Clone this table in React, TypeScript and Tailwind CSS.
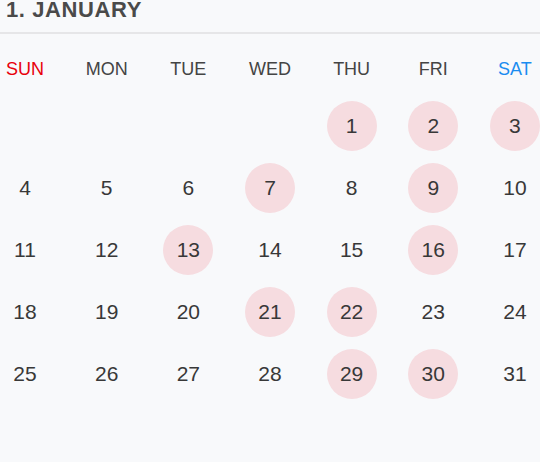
const weeks: (number | null)[][] = [
  [null, null, null, null, 1, 2, 3],
  [4, 5, 6, 7, 8, 9, 10],
  [11, 12, 13, 14, 15, 16, 17],
  [18, 19, 20, 21, 22, 23, 24],
  [25, 26, 27, 28, 29, 30, 31],
];

const marked = [1, 2, 3, 7, 9, 13, 16, 21, 22, 29, 30];

const days = [
  { label: "SUN", color: "text-[#e8000b]" },
  { label: "MON", color: "text-[#444]" },
  { label: "TUE", color: "text-[#444]" },
  { label: "WED", color: "text-[#444]" },
  { label: "THU", color: "text-[#444]" },
  { label: "FRI", color: "text-[#444]" },
  { label: "SAT", color: "text-[#1a8cf0]" },
];

export default function App() {
  return (
    <div className="w-[540px] h-[462px] overflow-hidden bg-[#f8f9fb] font-['Liberation_Sans',Arial,sans-serif]">
      <div className="h-[34px] border-b-2 border-[#e6e6e8] pl-[6px]">
        <h1 className="text-[22px] leading-[20px] font-bold tracking-[0.6px] text-[#4a4a4a]">1. JANUARY</h1>
      </div>

      <div className="flex justify-between mt-[25px]">
        {days.map((d) => (
          <div key={d.label} className={`w-[50px] text-center text-[18px] leading-[20px] whitespace-nowrap ${d.color}`}>
            {d.label}
          </div>
        ))}
      </div>

      <div className="flex flex-col gap-[12px] mt-[22px]">
        {weeks.map((week, i) => (
          <div key={i} className="flex justify-between">
            {week.map((n, j) => (
              <div
                key={j}
                className={`w-[50px] h-[50px] rounded-full flex items-center justify-center text-[21px] text-[#383838] ${
                  n !== null && marked.includes(n) ? "bg-[#f6dce0]" : ""
                }`}
              >
                {n}
              </div>
            ))}
          </div>
        ))}
      </div>
    </div>
  );
}
